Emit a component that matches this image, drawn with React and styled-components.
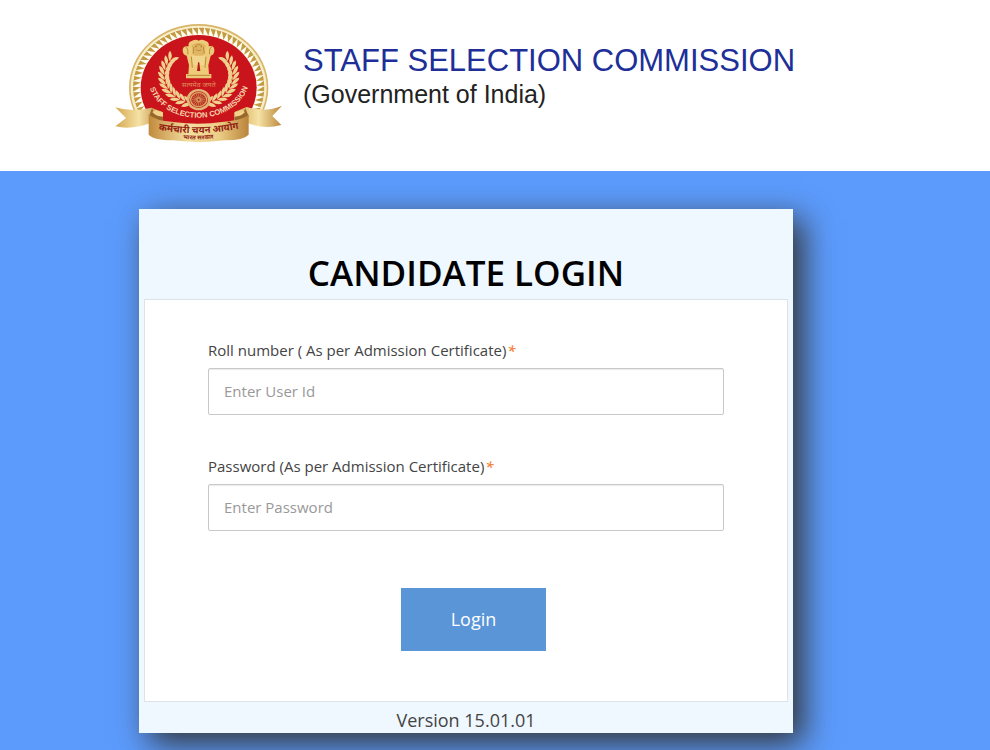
import React from 'react';
import styled, { createGlobalStyle } from 'styled-components';

const GlobalStyle = createGlobalStyle`
  *, *::before, *::after { box-sizing: border-box; }
  html, body { margin: 0; min-height: 100%; }
  body {
    background: #5c9bfc;
    color: #444444;
    font-family: "Open Sans", sans-serif;
    font-size: 15px;
    line-height: 20px;
  }
`;

const Header = styled.header`
  display: flex;
  align-items: flex-start;
  gap: 8px;
  height: 171px;
  padding: 15px 20px 0 105px;
  background: #ffffff;
`;

const EmblemArt = styled.svg`
  flex: none;
  width: 190px;
  height: 135px;
`;

const Organisation = styled.div`
  padding-top: 29px;
  font-family: "Liberation Sans", Arial, sans-serif;
  white-space: nowrap;
`;

const OrganisationName = styled.h2`
  margin: 0;
  color: #202f98;
  font-size: 31px;
  font-weight: 400;
  line-height: 34px;
`;

const OrganisationNote = styled.p`
  margin: 0;
  color: #222222;
  font-size: 25px;
  line-height: 32px;
`;

const Main = styled.main`
  padding: 38px 197px 40px 139px;
`;

const Card = styled.section`
  padding: 0 5px;
  background: #eff7ff;
  box-shadow: 10px 10px 30px #333333;
`;

const Title = styled.h1`
  margin: 0;
  padding: 39px 0 1px;
  color: #000000;
  font-size: 35px;
  font-weight: 600;
  line-height: 50px;
  text-align: center;
`;

const LoginForm = styled.form`
  padding: 40px 63px 50px;
  border: 1px solid #dde3e8;
  background: #ffffff;
`;

const Field = styled.div`
  display: flex;
  flex-direction: column;
  gap: 8px;
  margin-bottom: ${({ $last }) => ($last ? '57px' : '41px')};
`;

const FieldLabel = styled.label`
  color: #444444;
  font-size: 15px;
  line-height: 20px;
`;

const Required = styled.em`
  margin-left: 1px;
  color: #f5833c;
  font-weight: 600;
`;

const TextInput = styled.input`
  width: 100%;
  height: 47px;
  padding: 0 15px 1px;
  border: 1px solid #c8c8c8;
  border-radius: 2px;
  background: #ffffff;
  box-shadow: inset 0 1px 1px rgba(0, 0, 0, 0.08);
  color: #444444;
  font: 15px/20px "Open Sans", sans-serif;
  &::placeholder { color: #999999; opacity: 1; }
`;

const Actions = styled.div`
  display: flex;
  justify-content: center;
  padding-left: 15px;
`;

const LoginButton = styled.button`
  width: 145px;
  height: 63px;
  padding: 0 0 2px;
  border: 0;
  background: #5995d7;
  color: #ffffff;
  font: 18px/24px "Open Sans", sans-serif;
  cursor: pointer;
`;

const Version = styled.p`
  margin: 0;
  padding: 6px 0 1px;
  font-size: 18px;
  line-height: 24px;
  text-align: center;
`;

const point = (cx, cy, rx, ry, deg) => {
  const t = (deg * Math.PI) / 180;
  return [cx + rx * Math.cos(t), cy + ry * Math.sin(t)];
};

const teeth = Array.from({ length: 46 }, (_, i) => {
  const a = 150 + i * (240 / 46);
  return [
    point(281, 218, 197, 180, a),
    point(281, 218, 197, 180, a + 4.8),
    point(281, 218, 174, 158, a + 4.4),
  ]
    .map((p) => p.map((n) => n.toFixed(1)).join(','))
    .join(' ');
});

const leaves = Array.from({ length: 12 }, (_, i) => {
  const a = 106 + i * 10;
  const [x, y] = point(281, 183, 104, 84, a);
  return { x, y, a };
});

function Wreath() {
  return leaves.map(({ x, y, a }) => (
    <g key={a} transform={`translate(${x} ${y}) rotate(${a + 90})`}>
      <path d="M-6 1Q4 -18 20 -17Q16 0 -6 1Z" />
      <path d="M-6 1Q4 18 20 17Q16 2 -6 1Z" />
    </g>
  ));
}

function Emblem() {
  return (
    <EmblemArt viewBox="0 0 570 405" role="img" aria-label="Staff Selection Commission emblem">
      <defs>
        <linearGradient id="ribbon" x1="0" x2="1">
          <stop offset="0" stopColor="#c18a3c" />
          <stop offset="0.4" stopColor="#f4e0a2" />
          <stop offset="0.7" stopColor="#eccf87" />
          <stop offset="1" stopColor="#ba833a" />
        </linearGradient>
        <linearGradient id="tail" x1="0" x2="1">
          <stop offset="0" stopColor="#d5a750" />
          <stop offset="0.5" stopColor="#f5e2a5" />
          <stop offset="1" stopColor="#bc863b" />
        </linearGradient>
        <clipPath id="disc">
          <path d="M0 0H570V300H0Z" />
        </clipPath>
        <path id="motto" d="M127 188C144 349 416 349 437 186" />
        <path id="ribbonTop" d="M151 343Q281 368 411 339" />
        <path id="ribbonBottom" d="M210 368Q281 380 350 366" />
      </defs>
      <g clipPath="url(#disc)">
        <ellipse cx="281" cy="218" rx="209" ry="191" fill="#d8b568" />
        <ellipse cx="281" cy="218" rx="204" ry="186" fill="#f8edc5" />
        <ellipse cx="281" cy="218" rx="198" ry="181" fill="#fffdf0" />
        {teeth.map((points) => (
          <polygon key={points} points={points} fill="#c39b42" />
        ))}
        <ellipse cx="281" cy="218" rx="174" ry="158" fill="#c9141c" />
      </g>
      <path d="M137 290H425L388 304V335H174V304Z" fill="#c9141c" />
      <g fill="#efd18d">
        <Wreath />
        <g transform="translate(562 0) scale(-1 1)">
          <Wreath />
        </g>
      </g>
      <g fill="#edcb78">
        <path d="M251 94Q248 82 260 78Q272 71 281 77Q290 71 302 78Q314 82 311 94Q328 90 328 106Q328 120 317 122L310 151L312 177H319V190H243V177H250L252 151L245 122Q233 120 233 106Q233 91 251 94Z" />
        <path d="M260 91Q281 76 302 91L297 119Q281 132 265 119Z" fill="#e0b461" />
        <path d="M261 122H301L297 150H265Z" fill="#f1d58d" />
        <path d="M240 94Q251 99 248 118M322 94Q311 99 314 118M267 96L264 116M295 96L298 116M272 91Q281 86 290 91M273 104Q281 111 289 104M259 125L262 158M303 125L300 158M246 181H316" fill="none" stroke="#bd8b3e" strokeWidth="3" />
        <circle cx="273" cy="95" r="2" fill="#986421" />
        <circle cx="289" cy="95" r="2" fill="#986421" />
        <path d="M276 168L279 143Q281 139 283 143L286 168Z" fill="#ba1919" />
      </g>
      <text x="281" y="215" textAnchor="middle" fontSize="21" fontFamily="Noto Sans, sans-serif" fill="#e08a58">सत्यमेव जयते</text>
      <ellipse cx="281" cy="254" rx="36" ry="32" fill="#e1b575" />
      <ellipse cx="281" cy="254" rx="28" ry="25" fill="#b92c20" />
      <ellipse cx="281" cy="254" rx="24" ry="21" fill="none" stroke="#e1a565" strokeWidth="4" />
      <g stroke="#d89a60" strokeWidth="2">
        {Array.from({ length: 16 }, (_, i) => {
          const [x, y] = point(281, 254, 20, 18, i * 22.5);
          return <line key={i} x1="281" y1="254" x2={x} y2={y} />;
        })}
      </g>
      <circle cx="281" cy="254" r="7" fill="#d99658" />
      <circle cx="281" cy="254" r="3" fill="#9a2219" />
      <text fontFamily="Liberation Sans, Arial, sans-serif" fontSize="23" fontWeight="700" fill="#f7d5ad">
        <textPath href="#motto" startOffset="50%" textAnchor="middle">STAFF SELECTION COMMISSION</textPath>
      </text>
      <path d="M31 277Q82 293 139 278L172 290V320L134 325Q80 345 31 334L63 309Z" fill="url(#tail)" />
      <path d="M531 272Q481 293 425 276L390 290V320L429 325Q479 344 529 330L502 303Z" fill="url(#tail)" />
      <path d="M141 280Q148 302 174 303V321L132 304Z" fill="#98672b" />
      <path d="M421 280Q414 302 388 303V321L431 304Z" fill="#98672b" />
      <path d="M142 291Q153 305 174 305V292L151 285ZM420 291Q409 305 388 305V292L411 285Z" fill="#f0d28b" />
      <path d="M131 298Q150 318 206 321Q281 332 357 320Q416 316 431 298V359Q414 377 358 376Q281 387 205 376Q147 376 131 359Z" fill="url(#ribbon)" />
      <g fontFamily="Noto Sans, sans-serif" fontWeight="700" fill="#932213">
        <text fontSize="29">
          <textPath href="#ribbonTop" startOffset="50%" textAnchor="middle">कर्मचारी चयन आयोग</textPath>
        </text>
        <text fontSize="18">
          <textPath href="#ribbonBottom" startOffset="50%" textAnchor="middle">भारत सरकार</textPath>
        </text>
      </g>
    </EmblemArt>
  );
}

export default function App() {
  return (
    <>
      <GlobalStyle />
      <Header>
        <Emblem />
        <Organisation>
          <OrganisationName>STAFF SELECTION COMMISSION</OrganisationName>
          <OrganisationNote>(Government of India)</OrganisationNote>
        </Organisation>
      </Header>
      <Main>
        <Card>
          <Title>CANDIDATE LOGIN</Title>
          <LoginForm onSubmit={(event) => event.preventDefault()}>
            <Field>
              <FieldLabel htmlFor="roll">
                Roll number ( As per Admission Certificate)<Required>*</Required>
              </FieldLabel>
              <TextInput id="roll" type="text" placeholder="Enter User Id" required />
            </Field>
            <Field $last>
              <FieldLabel htmlFor="password">
                Password (As per Admission Certificate)<Required>*</Required>
              </FieldLabel>
              <TextInput id="password" type="password" placeholder="Enter Password" required />
            </Field>
            <Actions>
              <LoginButton type="submit">Login</LoginButton>
            </Actions>
          </LoginForm>
          <Version>Version 15.01.01</Version>
        </Card>
      </Main>
    </>
  );
}
